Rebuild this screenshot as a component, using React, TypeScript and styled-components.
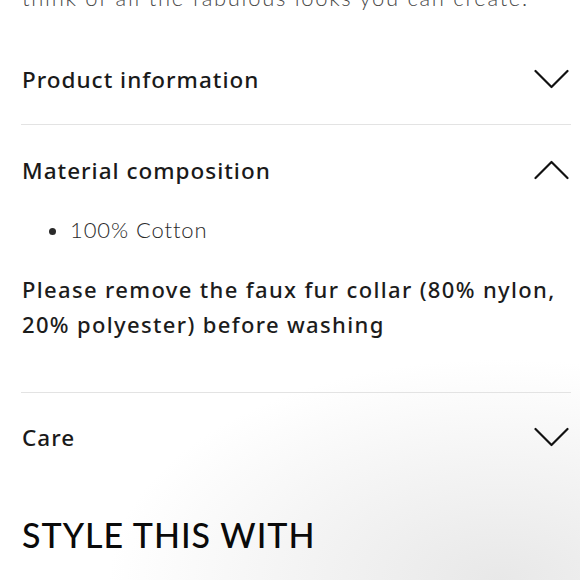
import React, { useState } from 'react';
import styled, { createGlobalStyle } from 'styled-components';

const GlobalStyle = createGlobalStyle`
  html, body {
    margin: 0;
    padding: 0;
    height: 100%;
  }
  body {
    background: radial-gradient(ellipse 460px 260px at 500px 580px, #e8e8e8 0%, #f4f4f4 45%, #ffffff 85%);
    background-attachment: fixed;
    font-family: 'Noto Sans', 'Lato', sans-serif;
    color: #1c1c1c;
    overflow: hidden;
  }
`;

const Page = styled.div`
  width: 580px;
  height: 580px;
  overflow: hidden;
  box-sizing: border-box;
  padding: 0 9px 0 21px;
`;

const Intro = styled.p`
  margin: -16px 0 22px 1px;
  font-family: 'Lato', sans-serif;
  font-size: 22px;
  line-height: 28px;
  font-weight: 300;
  letter-spacing: 1.7px;
  color: #4a4a4a;
  white-space: nowrap;
`;

const Section = styled.section<{ $last?: boolean }>`
  border-bottom: ${(p) => (p.$last ? 'none' : '1.5px solid #e3e3e3')};
`;

const Header = styled.button<{ $height: number }>`
  all: unset;
  box-sizing: border-box;
  width: 100%;
  height: ${(p) => p.$height}px;
  display: flex;
  align-items: center;
  justify-content: space-between;
  padding: 0 2px 0 1px;
  cursor: pointer;
`;

const Title = styled.span<{ $weight?: number }>`
  font-size: 22.5px;
  font-weight: ${(p) => p.$weight ?? 500};
  letter-spacing: 1px;
  color: #1a1a1a;
`;

const Body = styled.div`
  padding: 0 0 50px 1px;
`;

const List = styled.ul`
  margin: 0;
  padding: 0 0 0 48px;
  font-family: 'Lato', sans-serif;
  font-size: 22px;
  font-weight: 300;
  line-height: 30px;
  letter-spacing: 0.9px;
  color: #2a2a2a;
  li::marker {
    font-size: 22px;
  }
`;

const Note = styled.p`
  margin: 27px 0 0;
  max-width: 548px;
  font-size: 22px;
  font-weight: 500;
  line-height: 35px;
  letter-spacing: 1.35px;
  color: #1c1c1c;
`;

const Heading = styled.h2`
  margin: 33px 0 0 1px;
  font-family: 'Lato', sans-serif;
  font-size: 34px;
  font-weight: 500;
  letter-spacing: 1px;
  color: #0a0a0a;
`;

const Chevron = ({ up }: { up?: boolean }) => (
  <svg width="35" height="20" viewBox="0 0 35 20" fill="none">
    <polyline
      points={up ? '1.5,18 17.5,2 33.5,18' : '1.5,2 17.5,18 33.5,2'}
      stroke="#111"
      strokeWidth="2.2"
      strokeLinecap="round"
      strokeLinejoin="round"
    />
  </svg>
);

export default function App() {
  const [open, setOpen] = useState<string>('material');

  const toggle = (key: string) => setOpen(open === key ? '' : key);

  return (
    <>
      <GlobalStyle />
      <Page>
        <Intro>think of all the fabulous looks you can create.</Intro>

        <Section>
          <Header $height={90} onClick={() => toggle('product')}>
            <Title>Product information</Title>
            <Chevron up={open === 'product'} />
          </Header>
        </Section>

        <Section>
          <Header $height={90} onClick={() => toggle('material')}>
            <Title>Material composition</Title>
            <Chevron up={open === 'material'} />
          </Header>
          {open === 'material' && (
            <Body>
              <List>
                <li>100% Cotton</li>
              </List>
              <Note>
                Please remove the faux fur collar (80% nylon, 20% polyester) before washing
              </Note>
            </Body>
          )}
        </Section>

        <Section $last>
          <Header $height={88} onClick={() => toggle('care')}>
            <Title $weight={500}>Care</Title>
            <Chevron up={open === 'care'} />
          </Header>
        </Section>

        <Heading>STYLE THIS WITH</Heading>
      </Page>
    </>
  );
}
